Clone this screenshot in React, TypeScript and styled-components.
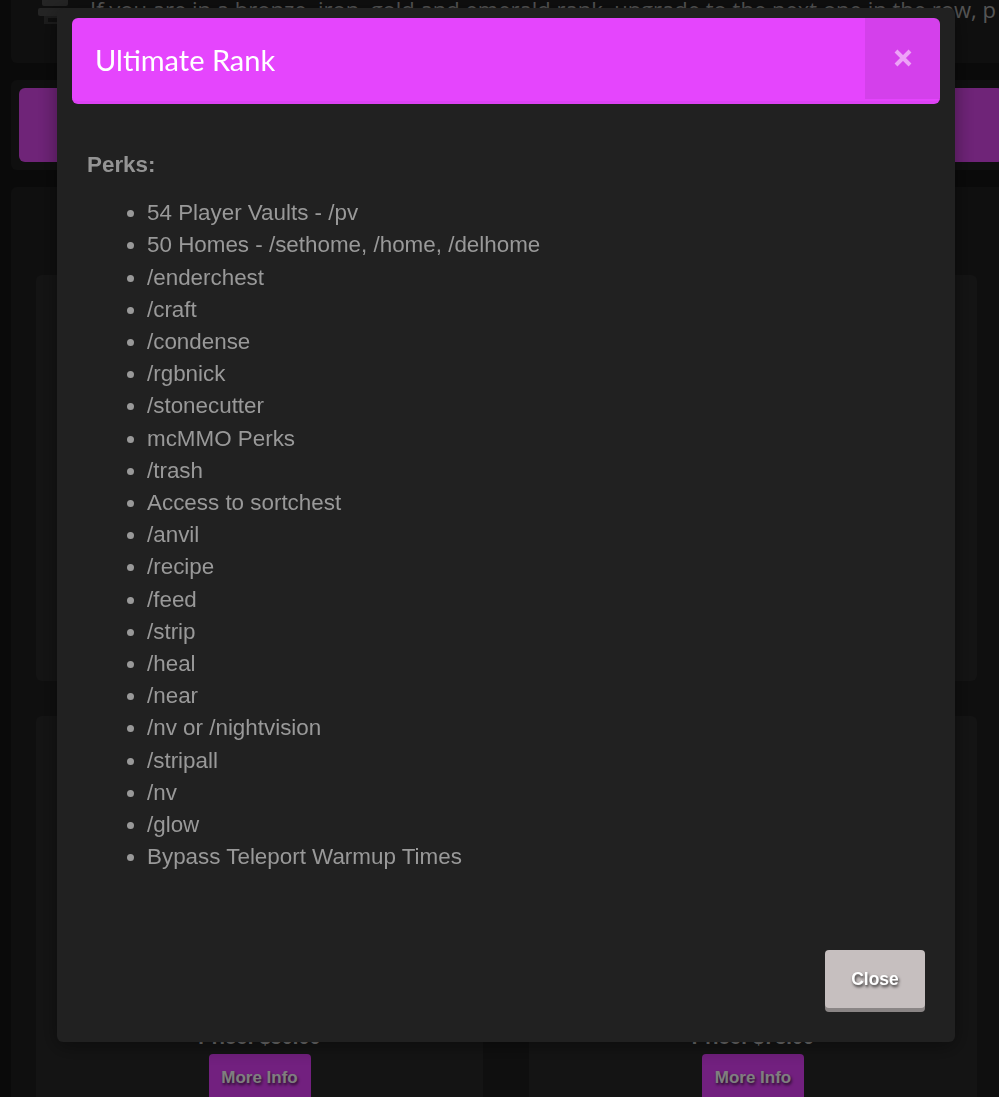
import { FunctionComponent } from "react";
import styled, { createGlobalStyle } from "styled-components";

const perks = [
  "54 Player Vaults - /pv",
  "50 Homes - /sethome, /home, /delhome",
  "/enderchest",
  "/craft",
  "/condense",
  "/rgbnick",
  "/stonecutter",
  "mcMMO Perks",
  "/trash",
  "Access to sortchest",
  "/anvil",
  "/recipe",
  "/feed",
  "/strip",
  "/heal",
  "/near",
  "/nv or /nightvision",
  "/stripall",
  "/nv",
  "/glow",
  "Bypass Teleport Warmup Times",
];

const GlobalStyle = createGlobalStyle`
  html, body {
    margin: 0;
    padding: 0;
    background: #151515;
    overflow: hidden;
    font-family: "Liberation Sans", Arial, sans-serif;
  }
`;

const Page = styled.div`
  width: 1000px;
  margin-left: 11px;
  display: flex;
  flex-direction: column;
  gap: 17px;
`;

const Panel = styled.div`
  background: #1f1f1f;
  border-radius: 6px;
`;

const NoticePanel = styled(Panel)`
  height: 63px;
  border-radius: 0 0 6px 6px;
  display: flex;
  align-items: flex-start;
  gap: 18px;
  padding-left: 27px;
  box-sizing: border-box;
  overflow: hidden;
`;

const NoticeIcon = styled.div`
  width: 34px;
  height: 30px;
  margin-top: -4px;
  flex-shrink: 0;
`;

const NoticeText = styled.p`
  margin: -6px 0 0;
  font-size: 22px;
  color: #aaa;
  white-space: nowrap;
  font-family: "Open Sans", sans-serif;
`;

const BannerPanel = styled(Panel)`
  padding: 8px;
`;

const Banner = styled.div`
  height: 74px;
  border-radius: 6px;
  background: #de48f0;
`;

const ShopPanel = styled(Panel)`
  padding: 88px 25px 40px;
  display: grid;
  grid-template-columns: 447px 448px;
  column-gap: 46px;
  row-gap: 35px;
`;

const Card = styled.div<{ $tall?: boolean }>`
  background: #292929;
  border-radius: 6px;
  height: ${({ $tall }) => ($tall ? "420px" : "406px")};
  box-sizing: border-box;
  padding-bottom: 34px;
  display: flex;
  flex-direction: column;
  align-items: center;
  justify-content: flex-end;
`;

const Price = styled.div`
  font-size: 20px;
  font-weight: bold;
  color: #ddd;
  margin-bottom: 5px;
`;

const MoreInfo = styled.button`
  width: 102px;
  height: 48px;
  border: none;
  border-radius: 4px;
  background: #e540fe;
  color: #fff;
  font-family: "Liberation Sans", Arial, sans-serif;
  font-weight: bold;
  font-size: 17px;
  text-shadow: 1px 2px 3px rgba(0, 0, 0, 0.7);
  padding: 0;
`;

const Backdrop = styled.div`
  position: fixed;
  inset: 0;
  background: rgba(0, 0, 0, 0.5);
  padding: 8px 0 0 57px;
`;

const Modal = styled.div`
  width: 898px;
  height: 1034px;
  box-sizing: border-box;
  background: #212121;
  border-radius: 6px;
  padding: 10px 15px 30px;
  display: flex;
  flex-direction: column;
  box-shadow: 0 4px 20px rgba(0, 0, 0, 0.4);
`;

const Header = styled.div`
  height: 83px;
  background: #e545fd;
  border-bottom: 3px solid #dd43f4;
  border-radius: 6px;
  display: flex;
  align-items: center;
  justify-content: space-between;
  overflow: hidden;
`;

const Title = styled.h2`
  margin: 0 0 0 23px;
  font-family: Lato, sans-serif;
  font-weight: normal;
  font-size: 29px;
  color: #fff;
`;

const XButton = styled.div`
  width: 75px;
  height: 100%;
  background: rgba(0, 0, 0, 0.07);
  display: flex;
  align-items: center;
  justify-content: center;
  margin-top: -4px;
`;

const Body = styled.div`
  flex: 1;
  padding: 45px 15px 0;
  font-size: 22.4px;
  line-height: 32.2px;
  color: #999;
`;

const PerksLabel = styled.div`
  font-weight: bold;
  color: #949494;
`;

const PerkList = styled.ul`
  margin: 16px 0 0;
  padding-left: 60px;
`;

const Footer = styled.div`
  display: flex;
  justify-content: flex-end;
  padding-right: 15px;
`;

const CloseButton = styled.button`
  width: 100px;
  height: 58px;
  border: none;
  border-radius: 4px;
  background: #c6bfbf;
  box-shadow: 0 4px 0 #8a8585;
  color: #fff;
  font-family: "Liberation Sans", Arial, sans-serif;
  font-weight: bold;
  font-size: 17.5px;
  text-shadow: 1px 2px 3px rgba(0, 0, 0, 0.75);
  margin-bottom: 4px;
`;

const App: FunctionComponent = () => (
  <>
    <GlobalStyle />
    <Page>
      <NoticePanel>
        <NoticeIcon>
          <svg width="34" height="30" viewBox="0 0 34 30">
            <rect x="4" y="0" width="26" height="10" rx="2" fill="#4a4a4a" />
            <rect x="0" y="12" width="34" height="8" rx="2" fill="#4a4a4a" />
            <rect x="6" y="20" width="22" height="8" fill="#3a3a3a" />
            <rect x="10" y="22" width="14" height="4" fill="#1f1f1f" />
          </svg>
        </NoticeIcon>
        <NoticeText>
          If you are in a bronze, iron, gold and emerald rank, upgrade to the next one in the row, p
        </NoticeText>
      </NoticePanel>
      <BannerPanel>
        <Banner />
      </BannerPanel>
      <ShopPanel>
        <Card />
        <Card />
        <Card $tall>
          <Price>Price: $50.00</Price>
          <MoreInfo>More Info</MoreInfo>
        </Card>
        <Card $tall>
          <Price>Price: $75.00</Price>
          <MoreInfo>More Info</MoreInfo>
        </Card>
      </ShopPanel>
    </Page>
    <Backdrop>
      <Modal>
        <Header>
          <Title>Ultimate Rank</Title>
          <XButton>
            <svg width="20" height="20" viewBox="0 0 20 20">
              <path d="M3 3 L17 17 M17 3 L3 17" stroke="#eda2f7" strokeWidth="4" />
            </svg>
          </XButton>
        </Header>
        <Body>
          <PerksLabel>Perks:</PerksLabel>
          <PerkList>
            {perks.map((perk) => (
              <li key={perk}>{perk}</li>
            ))}
          </PerkList>
        </Body>
        <Footer>
          <CloseButton>Close</CloseButton>
        </Footer>
      </Modal>
    </Backdrop>
  </>
);

export default App;
